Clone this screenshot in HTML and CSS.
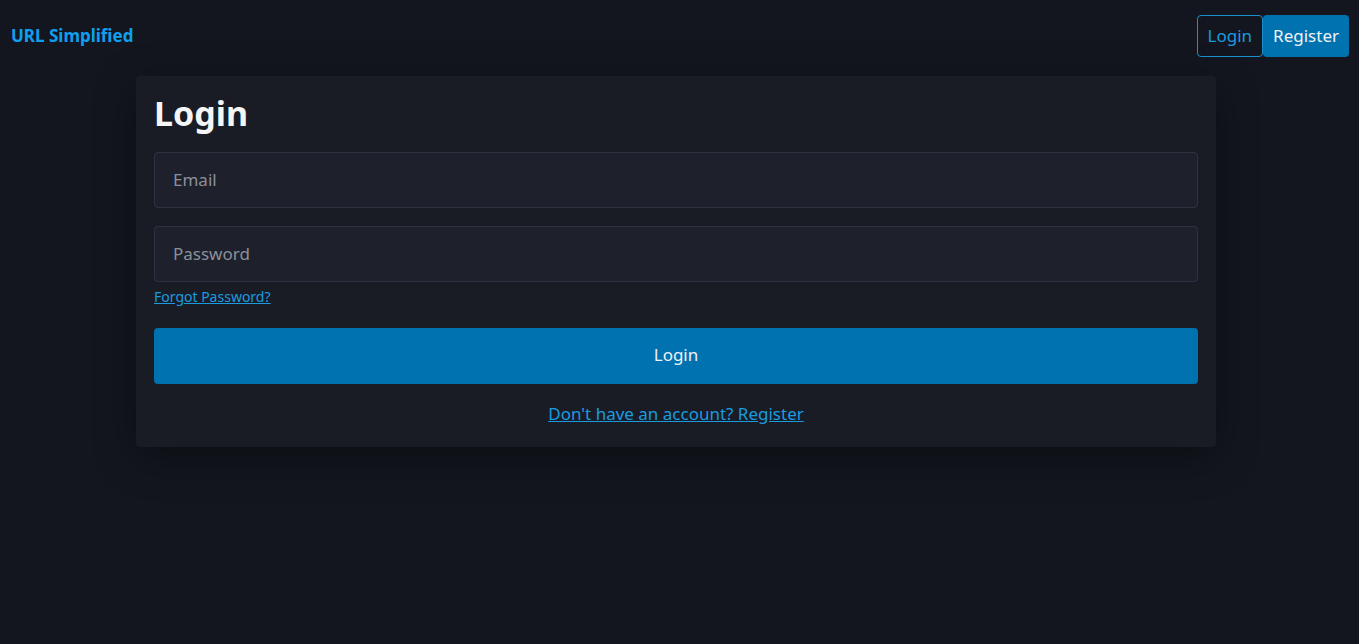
FILE: index.html
```html
<!DOCTYPE html>
<html lang="en">
<head>
<meta charset="utf-8">
<title>URL Simplified - Login</title>
<link rel="stylesheet" href="styles.css">
</head>
<body>
<header class="navbar">
  <a class="brand" href="#">URL Simplified</a>
  <nav class="nav-actions">
    <a class="btn btn-outline" href="#">Login</a>
    <a class="btn btn-solid" href="#">Register</a>
  </nav>
</header>
<main class="main">
  <section class="card">
    <h1 class="title">Login</h1>
    <form class="form">
      <input class="field" type="email" placeholder="Email">
      <input class="field field-second" type="password" placeholder="Password">
      <a class="forgot" href="#">Forgot Password?</a>
      <button class="submit" type="button">Login</button>
    </form>
    <p class="switch"><a href="#">Don't have an account? Register</a></p>
  </section>
</main>
</body>
</html>
```

FILE: styles.css
```css
* { box-sizing: border-box; }
html, body { margin: 0; padding: 0; }
body {
  background: #13161e;
  color: #e8eaee;
  font-family: "Noto Sans", "Open Sans", sans-serif;
  min-height: 644px;
}
.navbar {
  display: flex;
  justify-content: space-between;
  align-items: center;
  height: 72px;
  padding: 0 10px 0 11px;
}
.brand {
  color: #0ea0f0;
  font-weight: 700;
  font-size: 17px;
  text-decoration: none;
  margin-top: -2px;
}
.nav-actions { display: flex; gap: 0; }
.btn {
  display: flex;
  align-items: center;
  height: 42px;
  padding: 0 10px 1px;
  font-size: 17px;
  border-radius: 4px;
  text-decoration: none;
}
.btn-outline { color: #1a9be0; border: 1px solid #1a8fd0; }
.btn-solid { background: #0072b0; color: #f2f4f7; }
.main { padding: 4px 0 0 136px; }
.card {
  width: 1080px;
  background: #191c24;
  border-radius: 4px;
  padding: 14px 18px 21px;
  box-shadow: 0 10px 40px rgba(0, 0, 0, 0.35);
}
.title {
  margin: 0 0 18px;
  font-size: 34px;
  font-weight: 700;
  color: #f4f5f7;
  line-height: 44px;
  padding-top: 1px;
  height: 44px;
}
.form { display: flex; flex-direction: column; }
.field {
  height: 56px;
  background: #1e212b;
  border: 1px solid #2f3242;
  border-radius: 4px;
  padding: 0 18px 2px;
  font-family: inherit;
  font-size: 17px;
  color: #e8eaee;
}
.field::placeholder { color: #8b909b; }
.field-second { margin-top: 18px; }
.forgot {
  align-self: flex-start;
  margin-top: 6px;
  font-size: 14px;
  color: #1a9be0;
  line-height: 18px;
}
.submit {
  margin-top: 22px;
  height: 56px;
  background: #0072b0;
  color: #eef1f5;
  border: none;
  border-radius: 4px;
  font-family: inherit;
  font-size: 17px;
  padding: 0 0 4px;
}
.switch {
  margin: 18px 0 0;
  text-align: center;
  font-size: 17px;
  line-height: 24px;
}
.switch a { color: #1a9be0; }
```
